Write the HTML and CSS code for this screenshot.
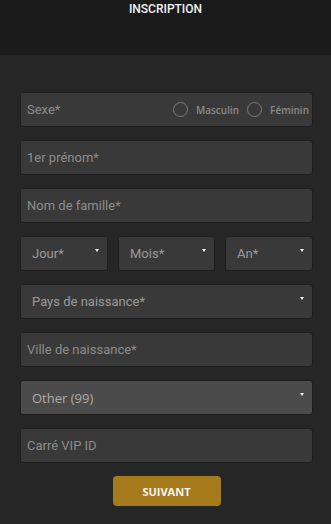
FILE: index.html
```html
<!doctype html>
<html lang="fr">
<head>
    <meta charset="utf-8" />
    <meta name="viewport" content="width=device-width, initial-scale=1" />
    <title>Inscription</title>
    <link rel="stylesheet" href="styles.css">
</head>
<body>
    <!-- Header -->
    <div class="header">
        <h1>INSCRIPTION</h1>
    </div>

    <!-- Form -->
    <form class="form">
        <div class="field sex-field">
            <span class="sex-label">Sexe*</span>
            <label class="radio"><span class="circle"></span>Masculin</label>
            <label class="radio"><span class="circle"></span>Féminin</label>
        </div>

        <input type="text" class="field input" placeholder="1er prénom*" />
        <input type="text" class="field input" placeholder="Nom de famille*" />

        <div class="date-row">
            <div class="select-wrap">
                <select class="field select"><option>Jour*</option></select>
            </div>
            <div class="select-wrap">
                <select class="field select"><option>Mois*</option></select>
            </div>
            <div class="select-wrap">
                <select class="field select"><option>An*</option></select>
            </div>
        </div>

        <div class="select-wrap">
            <select class="field select"><option>Pays de naissance*</option></select>
        </div>

        <input type="text" class="field input" placeholder="Ville de naissance*" />

        <div class="select-wrap">
            <select class="field select light"><option>Other (99)</option></select>
        </div>

        <input type="text" class="field input" placeholder="Carré VIP ID" />

        <button type="button" class="next-button">SUIVANT</button>
    </form>
</body>
</html>
```

FILE: styles.css
```css
body {
    margin: 0;
    background: #262626;
    font-family: Roboto, 'Noto Sans', sans-serif;
}
.header {
    height: 55px;
    background: #1b1b1b;
    text-align: center;
}
.header h1 {
    margin: 0;
    padding-top: 2px;
    font-size: 12px;
    font-weight: 500;
    line-height: 14px;
    color: #f2f2f2;
}
.form {
    display: flex;
    flex-direction: column;
    gap: 13px;
    padding: 37px 18px 20px 20px;
}
.field {
    box-sizing: border-box;
    width: 100%;
    height: 35px;
    margin: 0;
    background: #393939;
    border: 1px solid #1e1e1e;
    border-radius: 3px;
    font-family: Roboto, sans-serif;
    font-size: 13px;
    outline: none;
}
.input {
    padding: 0 6px;
    color: #bbb;
}
.input::placeholder {
    color: #8c8c8c;
}
.sex-field {
    display: flex;
    align-items: center;
    padding: 0 3px 0 6px;
}
.sex-label {
    flex: 1;
    color: #8c8c8c;
}
.radio {
    display: flex;
    align-items: center;
    gap: 8px;
    margin-left: 8px;
    font-family: 'Open Sans', sans-serif;
    font-size: 10px;
    font-weight: 600;
    color: #8a8a8a;
}
.circle {
    box-sizing: border-box;
    width: 15px;
    height: 15px;
    border: 1px solid #7c7c7c;
    border-radius: 50%;
}
.date-row {
    display: grid;
    grid-template-columns: 88px 1fr 88px;
    gap: 10px;
}
.select-wrap {
    position: relative;
}
.select-wrap::after {
    content: '';
    position: absolute;
    top: 13px;
    right: 9px;
    border-left: 2px solid transparent;
    border-right: 2px solid transparent;
    border-top: 3px solid #f0f0f0;
}
.select {
    appearance: none;
    -webkit-appearance: none;
    padding: 0 20px 0 11px;
    color: #999;
}
.select.light {
    background: #4b4b4b;
    font-family: 'Open Sans', sans-serif;
    color: #acacac;
}
.next-button {
    align-self: center;
    width: 108px;
    height: 30px;
    background: #a67b1b;
    border: none;
    border-radius: 4px;
    font-family: 'Open Sans', sans-serif;
    font-size: 11px;
    font-weight: bold;
    color: #f4f4f4;
}
```
